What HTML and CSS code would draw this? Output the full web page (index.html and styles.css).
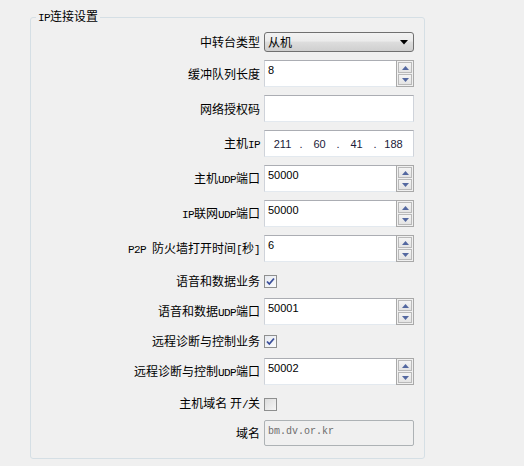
FILE: index.html
```html
<!DOCTYPE html>
<html>
<head>
<meta charset="utf-8">
<link rel="stylesheet" href="styles.css">
</head>
<body>
<div class="group">
  <div class="title"><span class="lat">IP</span>连接设置</div>
  <div class="rows">
    <div class="row r-combo">
      <span class="label">中转台类型</span>
      <div class="combo"><span class="combo-text">从机</span><svg class="arrow" width="8" height="5" viewBox="0 0 8 5"><path d="M0 0H8L4 4.5Z" fill="#000"/></svg></div>
    </div>
    <div class="row r-field">
      <span class="label">缓冲队列长度</span>
      <div class="field spin"><span class="val">8</span><div class="spinner"><div class="sbtn"><svg width="7" height="4" viewBox="0 0 7 4"><path d="M3.5 0L7 4H0Z" fill="#5468a0"/></svg></div><div class="sbtn"><svg width="7" height="4" viewBox="0 0 7 4"><path d="M0 0H7L3.5 4Z" fill="#5468a0"/></svg></div></div></div>
    </div>
    <div class="row r-field">
      <span class="label">网络授权码</span>
      <div class="field"><span class="val"></span></div>
    </div>
    <div class="row r-field">
      <span class="label">主机<span class="lat">IP</span></span>
      <div class="field ip"><span class="oct">211</span><span class="dot">.</span><span class="oct">60</span><span class="dot">.</span><span class="oct">41</span><span class="dot">.</span><span class="oct">188</span></div>
    </div>
    <div class="row r-field">
      <span class="label">主机<span class="lat">UDP</span>端口</span>
      <div class="field spin"><span class="val">50000</span><div class="spinner"><div class="sbtn"><svg width="7" height="4" viewBox="0 0 7 4"><path d="M3.5 0L7 4H0Z" fill="#5468a0"/></svg></div><div class="sbtn"><svg width="7" height="4" viewBox="0 0 7 4"><path d="M0 0H7L3.5 4Z" fill="#5468a0"/></svg></div></div></div>
    </div>
    <div class="row r-field">
      <span class="label"><span class="lat">IP</span>联网<span class="lat">UDP</span>端口</span>
      <div class="field spin"><span class="val">50000</span><div class="spinner"><div class="sbtn"><svg width="7" height="4" viewBox="0 0 7 4"><path d="M3.5 0L7 4H0Z" fill="#5468a0"/></svg></div><div class="sbtn"><svg width="7" height="4" viewBox="0 0 7 4"><path d="M0 0H7L3.5 4Z" fill="#5468a0"/></svg></div></div></div>
    </div>
    <div class="row r-field">
      <span class="label"><span class="lat">P2P </span>防火墙打开时间<span class="lat">[</span>秒<span class="lat">]</span></span>
      <div class="field spin"><span class="val">6</span><div class="spinner"><div class="sbtn"><svg width="7" height="4" viewBox="0 0 7 4"><path d="M3.5 0L7 4H0Z" fill="#5468a0"/></svg></div><div class="sbtn"><svg width="7" height="4" viewBox="0 0 7 4"><path d="M0 0H7L3.5 4Z" fill="#5468a0"/></svg></div></div></div>
    </div>
    <div class="row r-check c1">
      <span class="label">语音和数据业务</span>
      <div class="checkcell"><span class="check on"><svg width="11" height="11" viewBox="0 0 11 11"><path d="M2 5.5L4.3 8L9 2.5" fill="none" stroke="#3b4f9a" stroke-width="1.8"/></svg></span></div>
    </div>
    <div class="row r-field f2">
      <span class="label">语音和数据<span class="lat">UDP</span>端口</span>
      <div class="field spin"><span class="val">50001</span><div class="spinner"><div class="sbtn"><svg width="7" height="4" viewBox="0 0 7 4"><path d="M3.5 0L7 4H0Z" fill="#5468a0"/></svg></div><div class="sbtn"><svg width="7" height="4" viewBox="0 0 7 4"><path d="M0 0H7L3.5 4Z" fill="#5468a0"/></svg></div></div></div>
    </div>
    <div class="row r-check c2">
      <span class="label">远程诊断与控制业务</span>
      <div class="checkcell"><span class="check on"><svg width="11" height="11" viewBox="0 0 11 11"><path d="M2 5.5L4.3 8L9 2.5" fill="none" stroke="#3b4f9a" stroke-width="1.8"/></svg></span></div>
    </div>
    <div class="row r-field f2">
      <span class="label">远程诊断与控制<span class="lat">UDP</span>端口</span>
      <div class="field spin"><span class="val">50002</span><div class="spinner"><div class="sbtn"><svg width="7" height="4" viewBox="0 0 7 4"><path d="M3.5 0L7 4H0Z" fill="#5468a0"/></svg></div><div class="sbtn"><svg width="7" height="4" viewBox="0 0 7 4"><path d="M0 0H7L3.5 4Z" fill="#5468a0"/></svg></div></div></div>
    </div>
    <div class="row r-check c3">
      <span class="label">主机域名 开<span class="lat">/</span>关</span>
      <div class="checkcell"><span class="check"></span></div>
    </div>
    <div class="row r-domain">
      <span class="label">域名</span>
      <div class="field disabled"><span class="val mono">bm.dv.or.kr</span></div>
    </div>
  </div>
</div>
</body>
</html>
```

FILE: styles.css
```css
html, body {
  margin: 0;
  padding: 0;
  background: #f0f0f0;
}
body {
  font-family: "Noto Sans CJK SC", "Liberation Sans", sans-serif;
  font-size: 12px;
  color: #000;
}
.lat {
  font-family: "Liberation Mono", monospace;
  font-size: 11px;
  letter-spacing: -0.6px;
  white-space: pre;
}
.group {
  position: relative;
  box-sizing: border-box;
  margin: 17px 0 0 30px;
  width: 395px;
  height: 442px;
  border: 1px solid #d5dfe5;
  border-radius: 3px;
}
.title {
  position: absolute;
  left: 5px;
  top: -10px;
  padding: 0 2px;
  background: #f0f0f0;
  line-height: 16px;
  font-size: 12px;
}
.rows {
  display: flex;
  flex-direction: column;
  padding: 14px 10px 0 0;
}
.row {
  display: grid;
  grid-template-columns: 1fr 150px;
  column-gap: 4px;
  align-items: center;
}
.label {
  text-align: right;
  white-space: nowrap;
  line-height: 14px;
}
.r-combo { height: 20px; }
.r-field { height: 27px; margin-top: 8px; }
.r-field.f2 { margin-top: 6px; }
.r-check { height: 22px; }
.r-check.c1 { margin-top: 8px; }
.r-check.c2 { margin-top: 5px; }
.r-check.c3 { margin-top: 8px; }
.r-domain { height: 26px; margin-top: 5px; }

.combo {
  box-sizing: border-box;
  height: 20px;
  border: 1px solid #707070;
  border-radius: 3px;
  background: linear-gradient(#f2f2f2 0%, #ebebeb 45%, #dddddd 50%, #cfcfcf 100%);
  display: flex;
  align-items: center;
  justify-content: space-between;
  padding: 0 5px 0 3px;
}
.combo-text {
  font-size: 12px;
  line-height: 14px;
}
.arrow { display: block; }

.field {
  box-sizing: border-box;
  height: 100%;
  background: #fff;
  border: 1px solid #dbdfe6;
  border-top-color: #abadb3;
  border-left-color: #cfd3da;
  border-right-color: #cfd3da;
  border-bottom-color: #e3e9ef;
  display: flex;
  align-items: flex-start;
}
.val {
  flex: 1;
  font-family: "Liberation Sans", sans-serif;
  font-size: 11px;
  line-height: 13px;
  padding: 3px 0 0 3px;
}
.spinner {
  box-sizing: border-box;
  width: 18px;
  height: calc(100% + 2px);
  margin: -1px -1px -1px 0;
  border: 1px solid #a9a9a9;
  background: #f0f0f0;
  display: flex;
  flex-direction: column;
  gap: 1px;
  padding: 1px;
}
.sbtn {
  flex: 1;
  box-sizing: border-box;
  border: 1px solid #b9b9b9;
  background: linear-gradient(#f4f4f4, #e4e4e4);
  display: flex;
  align-items: center;
  justify-content: center;
}
.sbtn svg { display: block; }

.ip {
  align-items: center;
  padding-left: 5px;
  font-family: "Liberation Sans", sans-serif;
  font-size: 11px;
  color: #1a1a3a;
}
.oct {
  width: 25px;
  text-align: center;
}
.dot {
  width: 12px;
  text-align: center;
}

.checkcell {
  display: flex;
  align-items: center;
}
.check {
  box-sizing: border-box;
  width: 13px;
  height: 13px;
  border: 1px solid #8e8f8f;
  background: linear-gradient(135deg, #dcdcdc, #f6f6f6);
  display: flex;
  align-items: center;
  justify-content: center;
}
.check.on {
  background: linear-gradient(135deg, #e6e9ef, #fbfcfd);
}
.check svg { display: block; }

.field.disabled {
  background: #f0f0f0;
  border: 1px solid #adb2b5;
  border-radius: 2px;
}
.val.mono {
  font-family: "Liberation Mono", monospace;
  font-size: 10px;
  color: #6d6d6d;
  padding: 4px 0 0 3px;
}
```
